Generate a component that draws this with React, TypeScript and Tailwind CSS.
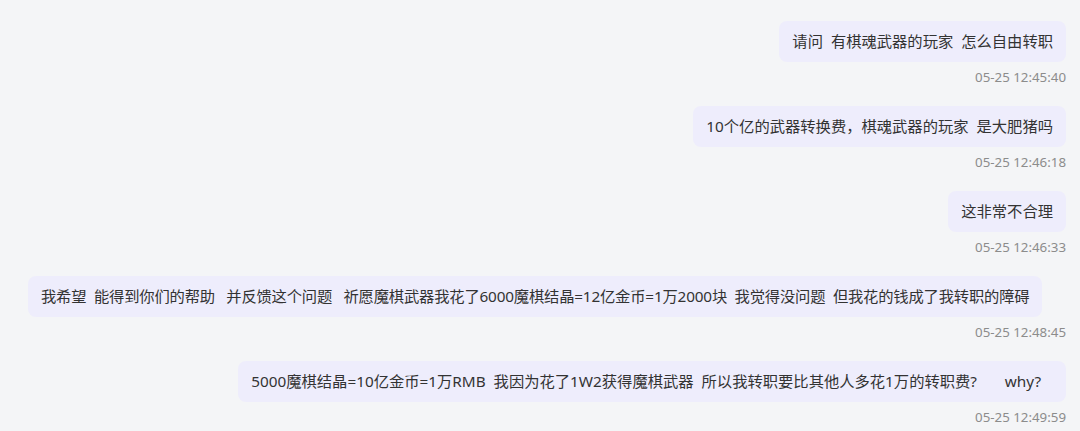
const messages = [
  { text: '请问  有棋魂武器的玩家  怎么自由转职', time: '05-25 12:45:40' },
  { text: '10个亿的武器转换费，棋魂武器的玩家  是大肥猪吗', time: '05-25 12:46:18' },
  { text: '这非常不合理', time: '05-25 12:46:33' },
  {
    text: '我希望  能得到你们的帮助   并反馈这个问题   祈愿魔棋武器我花了6000魔棋结晶=12亿金币=1万2000块  我觉得没问题  但我花的钱成了我转职的障碍',
    time: '05-25 12:48:45',
    wide: true,
  },
  {
    text: '5000魔棋结晶=10亿金币=1万RMB  我因为花了1W2获得魔棋武器  所以我转职要比其他人多花1万的转职费?       why?   ',
    time: '05-25 12:49:59',
  },
];

export default function App() {
  return (
    <div
      className="w-[1080px] h-[431px] overflow-hidden bg-[#f4f5f7] pt-[21px] pl-[28px] pr-[14px]"
      style={{ fontFamily: '"Noto Sans", "Noto Sans CJK SC", sans-serif' }}
    >
      <div className="flex flex-col gap-[20px]">
        {messages.map((m) => (
          <div key={m.time} className="flex flex-col items-end">
            <div
              className={`${m.wide ? 'self-start tracking-[-0.18px]' : ''} rounded-lg bg-[#eeedfc] px-[13px] py-[10px] text-[15.3px] leading-[21px] text-[#333333] whitespace-pre`}
            >
              {m.text}
            </div>
            <div className="mt-[6px] text-[13.3px] leading-[18px] text-[#8c8c8c]">{m.time}</div>
          </div>
        ))}
      </div>
    </div>
  );
}
